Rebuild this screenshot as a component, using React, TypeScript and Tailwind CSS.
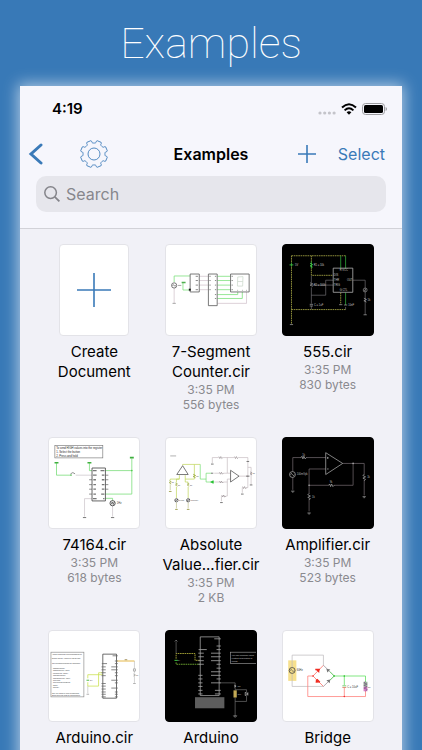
import type { ReactNode } from 'react';

interface FileItem {
  lines: string[];
  time?: string;
  size?: string;
  thumb: ReactNode;
}

const rad = (deg: number) => (deg * Math.PI) / 180;
const polar = (r: number, deg: number) =>
  `${(42 + r * Math.sin(rad(deg))).toFixed(1)} ${(42 - r * Math.cos(rad(deg))).toFixed(1)}`;

// eight teeth, with a notch pointing straight up
const gearPath =
  Array.from({ length: 8 }, (_, i) => {
    const a = 22.5 + i * 45;
    return `${i === 0 ? 'M' : 'L'}${polar(35, a - 13)}Q${polar(40, a - 13)} ${polar(41, a - 9)}L${polar(41, a + 9)}Q${polar(40, a + 13)} ${polar(35, a + 13)}Q${polar(33, a + 15)} ${polar(33, a + 19)}L${polar(33, a + 26)}Q${polar(33, a + 30)} ${polar(35, a + 32)}`;
  }).join('') + 'Z';

const GearIcon = () => (
  <svg viewBox="0 0 84 84" className="size-7" fill="none" stroke="#3a7ab8" strokeWidth="2.6">
    <path d={gearPath} strokeLinejoin="round" />
    <circle cx="42" cy="42" r="18" />
  </svg>
);

const Board = ({ box, dark, children }: { box: string; dark?: boolean; children: ReactNode }) => (
  <svg
    viewBox={box}
    className={`size-[92px] rounded-[4px] border ${dark ? 'border-black bg-black' : 'border-[#e3e3e8] bg-white'}`}
    fill="none"
    strokeWidth="2"
    fontFamily="'Liberation Sans', sans-serif"
    fontSize="8"
  >
    {children}
  </svg>
);

const Counter = () => (
  <Board box="16 26 276 276">
    <g stroke="#7be07b" strokeWidth="2.4">
      <path d="M41 140V121H90M68 142V164H88M174 122H214M174 135H214M174 149H214M174 163H214M174 178H236V170M174 190H250V170" />
    </g>
    <path d="M64 141H76" stroke="#4fae4f" strokeWidth="4" />
    <path d="M41 158V204M118 122H146M118 135H146M118 149H146M118 163H146M174 205H263V170" stroke="#cbb9c4" />
    <path d="M36 205H46M53 150H63" stroke="#777" />
    <g stroke="#555" strokeWidth="2.4">
      <circle cx="41" cy="150" r="8" />
      <path d="M36 151Q39 145 41 150T46 150" />
      <path d="M90 115H118V170H90ZM146 115H173V212H146ZM214 115H271V170H214Z" />
      <path d="M107 122H114M107 135H114M107 149H114M107 163H114M149 122H153M149 135H153M149 149H153M149 163H153M166 122H170M166 135H170M166 149H170M166 163H170M166 178H170M166 190H170M217 122H221M217 135H221M217 149H221M217 163H221M235 165H237M249 165H251M262 165H264" stroke="#888" strokeWidth="3" />
    </g>
    <rect x="86" y="160" width="6" height="6" fill="#111" />
    <path d="M236 124L252 123L251 152H235ZM236 138H251" stroke="#c4d4c4" />
  </Board>
);

const Timer = () => (
  <Board box="18 16 276 276" dark>
    <g stroke="#a5a545" strokeDasharray="5 2" strokeWidth="2.6">
      <path d="M44 49H210M44 49V258M44 214H210M105 49V109H172M195 162V198" />
    </g>
    <path d="M195 49V88M210 49V88M44 70V82M105 66V88M210 162V200" stroke="#2c9b35" strokeWidth="2.6" />
    <path d="M38 77H50M101 72L109 76L101 80L109 84" stroke="#3ed04a" strokeWidth="2.6" />
    <path d="M105 110V132M105 146V196M105 203V214M105 170H149V124H172M105 139H172M232 124H270V230M210 206V214" stroke="#77757a" />
    <path d="M172 87H232V161H172Z" stroke="#b5b5b5" strokeWidth="2.4" />
    <path d="M101 132L109 135L101 139L109 143M100 198H110M100 203H110M205 200H215M190 199H200M265 230H275M39 260H49M266 179L274 183L266 187L274 191" stroke="#b5b5b5" />
    <circle cx="270" cy="154" r="6" stroke="#999" />
    <path d="M266 158L274 150" stroke="#999" />
    <g fill="#c4c4c4">
      <text x="55" y="81">5V</text>
      <text x="112" y="81">R1 = 10k</text>
      <text x="112" y="142">R2 = 100k</text>
      <text x="113" y="203">C = 1uF</text>
      <text x="192" y="97">R VCC</text>
      <text x="174" y="112">DIS</text>
      <text x="174" y="127">THR</text>
      <text x="174" y="141">TRIG</text>
      <text x="214" y="127">OUT</text>
      <text x="192" y="158">G CTL</text>
      <text x="218" y="202">10nF</text>
      <text x="277" y="187">1k</text>
    </g>
  </Board>
);

const Register = () => (
  <Board box="14 15 276 276">
    <rect x="32" y="38" width="147" height="38" stroke="#777" />
    <g fill="#222" fontSize="8.5">
      <text x="36" y="49">To send HIGH values into the register</text>
      <text x="36" y="61">1. Select the button</text>
      <text x="36" y="73">2. Press and hold</text>
    </g>
    <path d="M37 92V129H80M138 92V115H146M187 115H268M268 78V187H187M187 200H209V207" stroke="#79dd79" strokeWidth="2.4" />
    <path d="M31 91H43M132 91H144M262 75H274M80 129H83" stroke="#3faf3f" strokeWidth="5" />
    <circle cx="268" cy="115" r="2.5" fill="#4ccc4c" />
    <path d="M96 129H146M146 201H123V256M209 223V256" stroke="#c4bcc2" />
    <path d="M118 259H128M204 259H214" stroke="#777" strokeWidth="3" />
    <path d="M80 125Q87 117 94 125" stroke="#555" />
    <path d="M146 107H187V208H146Z" stroke="#444" strokeWidth="2.5" />
    <path d="M137 143H146M137 158H146M137 172H146M137 187H146M187 129H196M187 143H196M187 158H196M187 172H196" stroke="#555" />
    <path d="M149 115H160M149 129H160M150 143H158M150 158H158M150 172H158M150 187H158M149 201H160M172 115H184M176 129H184M176 143H184M176 158H184M176 172H184M174 187H184M180 201H184" stroke="#777" strokeWidth="4" />
    <circle cx="209" cy="215" r="8" stroke="#333" strokeWidth="2.5" />
    <path d="M204 219L208 211L211 219L214 211" stroke="#333" />
    <text x="222" y="218" fill="#333">1Hz</text>
  </Board>
);

const Absolute = () => (
  <Board box="17 16 276 276">
    <path d="M30 71H48" stroke="#888" />
    <path d="M68 100V97H104V142H76V130M58 130V142H30V146M58 142H49V153M76 142V151H85V153M49 166V200M85 166V200M104 97H122" stroke="#b9d24a" />
    <path d="M122 97V142H140V124H156M140 142V151H156" stroke="#67dc67" />
    <path d="M30 158V176M49 214V232M85 214V232" stroke="#b9bd83" />
    <path d="M100 127L108 131L100 134L108 138M27 147L33 150L27 153L33 157M46 154L52 157L46 160L52 164M82 154L88 157L82 160L88 164" stroke="#8b9c25" />
    <path d="M50 128L68 101L85 128Z" stroke="#555" strokeWidth="2.4" />
    <path d="M159 93V76H178M192 76H226M240 76H268V133H240M205 76V124H215M205 142V194H201M205 142H215M165 124H181M193 124H205M165 151H181M193 151H205M268 106H278V160M268 133V168H265M251 168V184M187 194V210" stroke="#c3b8bd" />
    <path d="M179 73L182 79L185 73L188 79L191 76M227 73L230 79L233 73L236 79L239 76M181 121L184 127L187 121L190 127L193 124M181 148L184 154L187 148L190 154L193 151M188 191L191 197L194 191L197 197L201 194M252 165L255 171L258 165L261 171L265 168M275 120L281 123L275 126L281 129" stroke="#8f858a" />
    <path d="M155 96H163M155 124H162M183 214H191M247 188H255M274 160H282M264 88H272" stroke="#777" strokeWidth="3" />
    <path d="M154 151L162 147V155Z" fill="#18bd25" stroke="#18bd25" />
    <path d="M215 115V151L241 133Z" stroke="#555" strokeWidth="2.4" />
    <path d="M26 180H34M45 235H53M81 235H89" stroke="#a6a65c" strokeWidth="3" />
    <g stroke="#222">
      <circle cx="49" cy="207" r="5" />
      <circle cx="85" cy="207" r="5" />
      <path d="M45 210L53 204M81 210L89 204M263 133H273" />
    </g>
    <g fill="#444" fontSize="7">
      <text x="34" y="153">1k</text>
      <text x="53" y="162">1k</text>
      <text x="90" y="162">1k</text>
      <text x="110" y="135">1k</text>
      <text x="57" y="210">1Vpk</text>
      <text x="94" y="210">100mV</text>
      <text x="282" y="127">1k</text>
    </g>
  </Board>
);

const Amplifier = () => (
  <Board box="18 16 276 276" dark>
    <path d="M48 119V76H74M89 76H149M149 111H98V187M98 161H158M174 161H233V94M201 94H267V128M267 144V192M98 203V241M48 137V175" stroke="#80767b" />
    <g stroke="#b2b2b2" strokeWidth="2.2">
      <path d="M149 61V128L201 94Z" />
      <circle cx="47" cy="128" r="9" />
      <path d="M41 129Q44 121 47 128T53 128" />
      <path d="M153 77H158M155 74V80M153 111H158" />
      <path d="M73 76L76 72L79 80L82 72L86 80L90 76M158 161L161 157L164 165L167 157L171 165L175 161M98 186L94 190L102 194L94 198L102 202L98 205M267 127L263 131L271 135L263 139L271 143L267 147" />
      <path d="M43 179H53M46 182H50M93 246H103M96 249H100M262 196H272M265 199H269" />
    </g>
    <circle cx="98" cy="161" r="2.5" fill="#aaa" />
    <circle cx="233" cy="94" r="2.5" fill="#aaa" />
    <g fill="#b8b8b8">
      <text x="60" y="131">100mVpk</text>
      <text x="77" y="70">1k</text>
      <text x="161" y="155">9k</text>
      <text x="107" y="199">1k</text>
      <text x="276" y="140">1k</text>
    </g>
  </Board>
);

const notes = [
  'Arduino schematic and programming kit',
  'Double tap the Arduino to edit its code',
  'The following functions are supported:',
  '- digitalRead(pin)',
  '- digitalWrite(pin, value)',
  '- pinMode(pin, mode)',
  '- analogRead(pin)',
  '- analogWrite(pin, value)',
  '- delay(ms)',
  '- delayMicroseconds(us)',
  '- millis()',
  '- micros()',
  'Only one board in code is supported.',
  'Setup and loop must be implemented.',
];
const noteRows = [89, 102, 117, 131, 138, 146, 153, 161, 168, 176, 183, 191, 207, 214];

const ArduinoNotes = () => (
  <Board box="14 15 276 276">
    <rect x="20" y="80" width="101" height="137" stroke="#888" />
    <g fill="#333" fontSize="5.2">
      {notes.map((note, i) => (
        <text key={note} x="23" y={noteRows[i]}>
          {note}
        </text>
      ))}
    </g>
    <path d="M133 160V149H179M133 172V184H166V143H179" stroke="#cbe052" strokeWidth="2.4" />
    <path d="M129 166H137" stroke="#49bb49" strokeWidth="3" />
    <path d="M133 184V206M276 107V130M276 138V146M276 153V174" stroke="#bbb" />
    <path d="M222 107H276" stroke="#e4b646" strokeWidth="3" />
    <path d="M246 103H254" stroke="#80641c" />
    <path d="M179 86H221V221H179Z" stroke="#444" strokeWidth="2.4" />
    <path d="M209 91H225M176 115H192M175 125H188M175 134H188M175 143H188M175 152H188M175 176H188M175 184H188M175 193H188M175 202H188M175 209H188M175 217H188M216 107H225M216 115H225M205 125H225M205 134H225M216 143H225M216 152H225M205 166H225M216 174H225M205 190H225M216 202H225M216 209H225M216 217H225" stroke="#666" strokeWidth="2.4" />
    <path d="M129 209H137M272 176H280M273 131H279V138H273ZM273 147L279 150L273 153" stroke="#888" />
    <text x="140" y="169" fill="#333" fontSize="6">5V</text>
    <text x="281" y="152" fill="#333" fontSize="6">1k</text>
  </Board>
);

const ArduinoBoard = () => (
  <Board box="16 16 276 276" dark>
    <path d="M47 101V85H105V106H121" stroke="#b4b13a" strokeWidth="2.6" strokeDasharray="5 2" />
    <path d="M47 112V118H121" stroke="#79b535" strokeWidth="2.6" strokeDasharray="5 2" />
    <path d="M42 106H52" stroke="#43cf3c" strokeWidth="3" />
    <path d="M47 85V48M180 175H228V196M228 220V276M228 196H263V204M263 214V232H228" stroke="#777" />
    <path d="M43 48L47 44L51 48M223 276H233L228 281Z" stroke="#aaa" />
    <path d="M121 34H179V214H121Z" stroke="#b4b4b4" strokeWidth="2.2" />
    <path d="M164 40H184M116 73H141M115 84H132M115 95H132M115 107H132M115 118H132M115 152H128M115 163H128M115 175H128M115 186H128M115 198H128M115 209H128M171 62H184M171 73H184M154 84H184M154 95H184M154 107H184M171 118H184M171 130H184M154 141H184M154 152H184M171 163H184M154 175H184M166 198H184M166 209H184" stroke="#a0a0a0" strokeWidth="2.6" />
    <rect x="105" y="219" width="90" height="34" fill="#5d5d5d" />
    <rect x="214" y="81" width="90" height="35" stroke="#999" />
    <g fill="#ccc" fontSize="6.5">
      <text x="217" y="92">You can compose using</text>
      <text x="217" y="102">existing schematics by</text>
      <text x="217" y="112">linking</text>
    </g>
    <rect x="223" y="198" width="10" height="22" fill="#c2a955" />
    <path d="M225 182L231 185L225 188M259 204V214L267 209ZM267 204V214" stroke="#ccc" />
    <g fill="#bbb" fontSize="6">
      <text x="235" y="188">330</text>
      <text x="236" y="212">500</text>
      <text x="52" y="109">5V</text>
    </g>
  </Board>
);

const Bridge = () => (
  <Board box="18 16 276 276">
    <rect x="34" y="106" width="25" height="63" fill="#f7e08d" />
    <path d="M46 128V90H142V121M46 147V186H142" stroke="#bdb9bd" strokeWidth="2.2" />
    <circle cx="46" cy="137" r="9" stroke="#444" strokeWidth="2.5" />
    <path d="M40 138Q43 130 46 137T52 137" stroke="#444" />
    <path d="M142 121L110 154L142 186" stroke="#ff6a62" strokeWidth="2.4" />
    <path d="M110 154H94V217H271V200M206 190V217" stroke="#ff807a" strokeWidth="2.4" />
    <path d="M142 121L175 154L142 186" stroke="#9b929b" strokeWidth="2.4" />
    <path d="M162 141L175 154L162 167M175 154H271V172M206 154V182" stroke="#5fe05f" strokeWidth="2.4" />
    <path d="M119 135L130 133L129 145ZM119 163L130 174L118 175Z" fill="#ef2b20" />
    <path d="M117 134L131 134M122 164L131 173" stroke="#ef2b20" strokeWidth="4" />
    <path d="M151 132L163 134L154 143ZM163 165L161 176L151 167Z" fill="#777" />
    <path d="M200 184H212" stroke="#3db63d" />
    <path d="M200 189H212" stroke="#c45a2d" />
    <path d="M265 172H277V187H265Z" fill="#9bb69b" />
    <path d="M265 187H277V201H265Z" fill="#d982c8" />
    <path d="M271 171L266 175L276 179L266 183L276 187L266 191L276 195L271 201" stroke="#76547e" />
    <circle cx="206" cy="154" r="2.5" fill="#26bd26" />
    <circle cx="175" cy="154" r="2.5" fill="#26bd26" />
    <circle cx="110" cy="154" r="2.5" fill="#e33" />
    <circle cx="206" cy="217" r="2.5" fill="#e33" />
    <g fill="#333">
      <text x="60" y="140">60Hz</text>
      <text x="215" y="190">C = 10uF</text>
      <text x="279" y="190" fontSize="6">RL =</text>
    </g>
  </Board>
);

const NewDocument = () => (
  <div className="flex h-[92px] w-[70px] items-center justify-center rounded-[4px] border border-[#e3e3e8] bg-white">
    <svg viewBox="0 0 36 36" className="size-9" stroke="#3a7ab8" strokeWidth="1.6">
      <path d="M18 1V35M1 18H35" />
    </svg>
  </div>
);

const files: FileItem[] = [
  { lines: ['Create', 'Document'], thumb: <NewDocument /> },
  { lines: ['7-Segment', 'Counter.cir'], time: '3:35 PM', size: '556 bytes', thumb: <Counter /> },
  { lines: ['555.cir'], time: '3:35 PM', size: '830 bytes', thumb: <Timer /> },
  { lines: ['74164.cir'], time: '3:35 PM', size: '618 bytes', thumb: <Register /> },
  { lines: ['Absolute', 'Value...fier.cir'], time: '3:35 PM', size: '2 KB', thumb: <Absolute /> },
  { lines: ['Amplifier.cir'], time: '3:35 PM', size: '523 bytes', thumb: <Amplifier /> },
  { lines: ['Arduino.cir'], thumb: <ArduinoNotes /> },
  { lines: ['Arduino'], thumb: <ArduinoBoard /> },
  { lines: ['Bridge'], thumb: <Bridge /> },
];

const FileCell = ({ lines, time, size, thumb }: FileItem) => (
  <button type="button" className="flex flex-col items-center justify-start text-center">
    {thumb}
    <span className="mt-1.5 text-[15px] leading-5 text-black">
      {lines.map((line) => (
        <span key={line} className="block whitespace-nowrap">
          {line}
        </span>
      ))}
    </span>
    {time && (
      <span className="text-xs leading-[15px] text-[#8a8a8f]">
        <span className="block">{time}</span>
        <span className="block">{size}</span>
      </span>
    )}
  </button>
);

const StatusBar = () => (
  <div className="flex h-[46px] items-center justify-between pr-[15px] pl-8">
    <span className="text-[15px] leading-5 font-semibold">4:19</span>
    <div className="flex items-center gap-[5px]">
      <svg viewBox="0 0 18 12" className="h-3 w-[18px]" fill="#c4c4ca">
        <circle cx="2" cy="10" r="1.6" />
        <circle cx="6.7" cy="10" r="1.6" />
        <circle cx="11.4" cy="10" r="1.6" />
        <circle cx="16.1" cy="10" r="1.6" />
      </svg>
      <svg viewBox="0 0 16 12" className="h-3 w-4" fill="none" stroke="#000" strokeWidth="2">
        <path d="M1 4.6Q8 -2 15 4.6M3.6 7.4Q8 3.2 12.4 7.4" />
        <path d="M5.6 9.3Q8 7.2 10.4 9.3L8 11.7Z" fill="#000" stroke="none" />
      </svg>
      <svg viewBox="0 0 25 12" className="h-3 w-[25px]">
        <rect x="0.5" y="0.5" width="22" height="11" rx="3" fill="none" stroke="#9c9ca0" />
        <rect x="2" y="2" width="19" height="8" rx="1.6" />
        <path d="M23.6 4V8Q25 7.4 25 6T23.6 4Z" fill="#9c9ca0" />
      </svg>
    </div>
  </div>
);

export default function App() {
  return (
    <div className="flex h-screen flex-col overflow-hidden bg-[#3879b7] font-['Inter','Liberation_Sans',sans-serif]">
      <h1 className="flex h-[86px] shrink-0 items-center justify-center font-['Roboto','Inter',sans-serif] text-[43px] leading-none font-thin text-white">
        Examples
      </h1>
      <main className="mx-5 flex-1 bg-[#f1f1f7] shadow-[0_0_14px_2px_rgba(255,255,255,0.6)]">
        <header className="border-b border-[#d2d2d8] bg-[#f6f6fc] pb-4">
          <StatusBar />
          <nav className="grid h-11 grid-cols-[1fr_auto_1fr] items-center text-[#3a7ab8]">
            <div className="flex items-center gap-9 pl-2">
              <button type="button" aria-label="Back">
                <svg viewBox="0 0 16 22" className="h-[22px] w-4" fill="none" stroke="currentColor" strokeWidth="3">
                  <path d="M13 2L3 11L13 20" strokeLinecap="round" strokeLinejoin="miter" />
                </svg>
              </button>
              <button type="button" aria-label="Settings">
                <GearIcon />
              </button>
            </div>
            <h2 className="text-base font-semibold text-black">Examples</h2>
            <div className="flex items-center justify-end gap-[22px] pr-[17px]">
              <button type="button" aria-label="Add">
                <svg viewBox="0 0 18 18" className="size-[18px]" stroke="currentColor" strokeWidth="1.6">
                  <path d="M9 0V18M0 9H18" />
                </svg>
              </button>
              <button type="button" className="text-base">
                Select
              </button>
            </div>
          </nav>
          <label className="mx-4 flex h-9 items-center gap-1.5 rounded-[10px] bg-[#e6e6ec] px-2">
            <svg viewBox="0 0 16 16" className="size-4 shrink-0" fill="none" stroke="#84848a" strokeWidth="1.5">
              <circle cx="6.6" cy="6.6" r="5.8" />
              <path d="M10.8 10.8L15.4 15.4" strokeWidth="1.8" />
            </svg>
            <input
              type="search"
              aria-label="Search"
              placeholder="Search"
              className="w-full min-w-0 bg-transparent text-base outline-none placeholder:text-[#87878c]"
            />
          </label>
        </header>
        <section className="grid auto-rows-[193px] grid-cols-3 px-4 pt-[15px]">
          {files.map((file) => (
            <FileCell key={file.lines.join(' ')} {...file} />
          ))}
        </section>
      </main>
    </div>
  );
}
